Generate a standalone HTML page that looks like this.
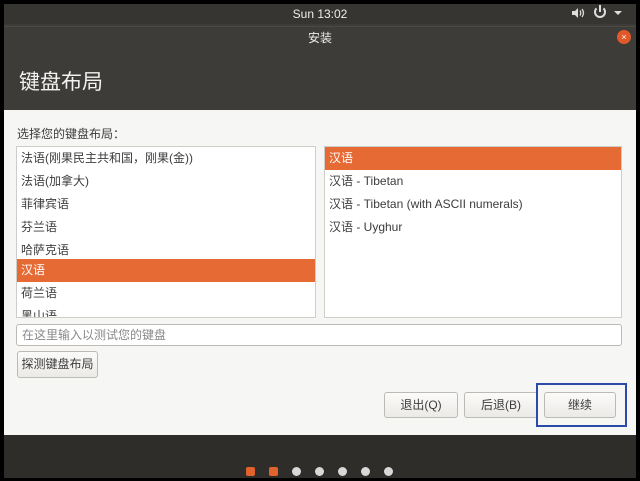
<!DOCTYPE html><html><head><meta charset="utf-8"><style>
*{margin:0;padding:0;box-sizing:border-box}
body{width:640px;height:481px;background:#000;position:relative;overflow:hidden;font-family:"Liberation Sans","Noto Sans CJK SC",sans-serif;font-size:12px;color:#3c3c3c}
.a{position:absolute}
.row{position:absolute;left:0;right:0;height:23px;line-height:23px;padding-left:4px}
.sel{background:#e66a34;color:#fff}
.btn{position:absolute;border:1px solid #bdbab5;border-radius:3px;background:linear-gradient(#fbfbfa,#eceae7);text-align:center;line-height:24px;color:#3c3c3c}
.dot{position:absolute;top:467px;width:9px;height:9px;border-radius:50%;background:#d8d8d8}
</style></head><body>
<div class="a" style="left:4px;top:4px;width:632px;height:20px;background:#363532;color:#eee;text-align:center;line-height:20px;font-size:12px">Sun 13:02</div>
<svg class="a" style="left:571px;top:7px" width="14" height="12" viewBox="0 0 14 12"><path d="M1 4h3l3-3v10l-3-3H1z" fill="#ddd"/><path d="M9 3.5q1.5 2.5 0 5M11 2q3 4 0 8" stroke="#ddd" stroke-width="1.3" fill="none"/></svg>
<div class="a" style="left:594px;top:6px;width:12px;height:12px;border:2px solid #ddd;border-radius:50%;border-top-color:transparent"></div>
<div class="a" style="left:599px;top:5px;width:2px;height:7px;background:#ddd"></div>
<div class="a" style="left:614px;top:11px;border:4px solid transparent;border-top-color:#ddd"></div>
<div class="a" style="left:4px;top:24px;width:632px;height:86px;background:#3d3c38"></div>
<div class="a" style="left:4px;top:26px;width:632px;height:1px;background:#4a4945"></div>
<div class="a" style="left:0;top:29px;width:640px;text-align:center;color:#eee;font-size:12px">安装</div>
<div class="a" style="left:617px;top:30px;width:14px;height:14px;border-radius:50%;background:#e0582a;color:#fff;font-size:9px;text-align:center;line-height:14px">×</div>
<div class="a" style="left:19px;top:66px;color:#f2f2f2;font-size:21px">键盘布局</div>
<div class="a" style="left:4px;top:110px;width:632px;height:325px;background:#f6f6f5"></div>
<div class="a" style="left:17px;top:125px;font-size:12px">选择您的键盘布局：</div>
<div class="a" style="left:16px;top:146px;width:300px;height:172px;background:#fff;border:1px solid #cfcdca;overflow:hidden">
<div class="row" style="top:0">法语(刚果民主共和国，刚果(金))</div>
<div class="row" style="top:23px">法语(加拿大)</div>
<div class="row" style="top:46px">菲律宾语</div>
<div class="row" style="top:69px">芬兰语</div>
<div class="row" style="top:92px">哈萨克语</div>
<div class="row sel" style="top:112px">汉语</div>
<div class="row" style="top:135px">荷兰语</div>
<div class="row" style="top:158px">黑山语</div>
</div>
<div class="a" style="left:324px;top:146px;width:298px;height:172px;background:#fff;border:1px solid #cfcdca;overflow:hidden">
<div class="row sel" style="top:0">汉语</div>
<div class="row" style="top:23px">汉语 - Tibetan</div>
<div class="row" style="top:46px">汉语 - Tibetan (with ASCII numerals)</div>
<div class="row" style="top:69px">汉语 - Uyghur</div>
</div>
<div class="a" style="left:16px;top:324px;width:606px;height:22px;background:#fff;border:1px solid #bdbab5;border-radius:3px;color:#888;line-height:20px;padding-left:5px">在这里输入以测试您的键盘</div>
<div class="btn" style="left:17px;top:351px;width:81px;height:27px">探测键盘布局</div>
<div class="btn" style="left:384px;top:392px;width:74px;height:26px">退出(Q)</div>
<div class="btn" style="left:464px;top:392px;width:74px;height:26px">后退(B)</div>
<div class="btn" style="left:544px;top:392px;width:72px;height:26px">继续</div>
<div class="a" style="left:536px;top:383px;width:91px;height:44px;border:2px solid #2c4aa8"></div>
<div class="a" style="left:4px;top:435px;width:632px;height:43px;background:#2e2d2a"></div>
<div class="dot" style="left:246px;background:#e0622d;border-radius:2px"></div>
<div class="dot" style="left:269px;background:#e0622d;border-radius:2px"></div>
<div class="dot" style="left:292px"></div><div class="dot" style="left:315px"></div><div class="dot" style="left:338px"></div><div class="dot" style="left:361px"></div><div class="dot" style="left:384px"></div>
</body></html>
